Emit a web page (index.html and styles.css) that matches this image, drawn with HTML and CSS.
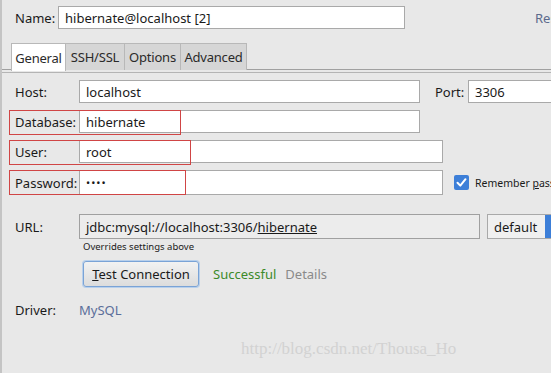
FILE: index.html
```html
<!DOCTYPE html>
<html>
<head>
<meta charset="utf-8">
<link rel="stylesheet" href="styles.css">
</head>
<body>
<div class="frame">
  <div class="edge-mark"></div>
  <div class="name-row">
    <span class="lbl name-lbl">Name:</span>
    <div class="input name-input">hibernate@localhost [2]</div>
    <span class="reset">Reset</span>
  </div>
  <div class="tabs">
    <div class="tab t1 active">General</div>
    <div class="tab t2">SSH/SSL</div>
    <div class="tab t3">Options</div>
    <div class="tab t4">Advanced</div>
  </div>
  <div class="form">
    <div class="row">
      <span class="lbl">Host:</span>
      <div class="input w-host">localhost</div>
      <span class="lbl port-lbl">Port:</span>
      <div class="input w-port">3306</div>
    </div>
    <div class="row mark mark-db">
      <span class="lbl">Database:</span>
      <div class="input w-host">hibernate</div>
    </div>
    <div class="row mark mark-user">
      <span class="lbl">User:</span>
      <div class="input w-user">root</div>
    </div>
    <div class="row mark mark-pw pw-row">
      <span class="lbl">Password:</span>
      <div class="input w-user pw">••••</div>
      <span class="check"><svg width="15" height="15" viewBox="0 0 15 15"><rect x="0" y="0" width="15" height="15" rx="2" fill="#3d7fd8"/><path d="M3.5 7.8 L6.3 10.6 L11.5 4.2" stroke="#fff" stroke-width="2" fill="none" stroke-linecap="round" stroke-linejoin="round"/></svg></span>
      <span class="remember">Remember <u>p</u>assword</span>
    </div>
    <div class="row url-row">
      <span class="lbl">URL:</span>
      <div class="input url">jdbc:mysql://localhost:3306/<u>hibernate</u></div>
      <div class="input dflt">default<span class="dflt-btn"></span></div>
    </div>
    <div class="hint">Overrides settings above</div>
    <div class="test-row">
      <button class="test-btn"><u>T</u>est Connection</button>
      <span class="ok">Successful</span>
      <span class="details">Details</span>
    </div>
    <div class="row driver-row">
      <span class="lbl">Driver:</span>
      <span class="mysql">MySQL</span>
    </div>
  </div>
  <div class="watermark">http://blog.csdn.net/Thousa_Ho</div>
</div>
</body>
</html>
```
FILE: styles.css
```css
* { box-sizing: border-box; }
html, body { margin: 0; padding: 0; }
body {
  width: 551px; height: 373px; overflow: hidden;
  background: #e8e8e8;
  font-family: "Noto Sans", "Open Sans", sans-serif;
  font-size: 13px; color: #1a1a1a;
}
.frame {
  position: relative;
  width: 551px; height: 373px;
  border-left: 2px solid #c4c4c4;
  overflow: hidden;
}
.edge-mark {
  position: absolute; left: -2px; top: 64px;
  width: 2px; height: 24px; background: #5b8fd6;
}
.name-row {
  display: flex; align-items: center;
  height: 23px; margin-top: 6px;
  padding-left: 13px;
}
.name-lbl { width: 43px; flex: none; }
.input {
  flex: none;
  background: #fff;
  border: 1px solid #a9a9a9;
  height: 23px;
  display: flex; align-items: center;
  padding-left: 6px;
  white-space: nowrap; overflow: hidden;
}
.name-input { width: 347px; }
.reset { margin-left: 130px; color: #5b6a8c; white-space: nowrap; }
.tabs {
  display: flex; margin-top: 14px;
  padding-left: 9px;
  height: 27px;
  border-bottom: 1px solid #a0a0a0;
  position: relative;
}
.tabs::after {
  content: ""; position: absolute; left: 0; right: 0; bottom: -4px;
  height: 1px; background: #b4b4b4;
}
.tab {
  display: flex; align-items: center; justify-content: center;
  background: #d6d6d6;
  border: 1px solid #b8b8b8; border-bottom: none;
  height: 27px; flex: none;
  color: #2a2a2a; letter-spacing: -0.2px;
}
.t1 { width: 55px; }
.t2 { width: 59px; }
.t3 { width: 56px; }
.t4 { width: 66px; }
.tab + .tab { border-left: none; }
.tab.active { background: #fff; height: 28px; margin-bottom: -1px; }
.form { padding-left: 13px; margin-top: 10px; }
.row {
  display: flex; align-items: center;
  height: 23px; margin-bottom: 7px;
  position: relative;
}
.row .lbl { width: 64px; flex: none; }
.w-host { width: 341px; }
.w-user { width: 364px; }
.port-lbl { width: 33px !important; margin-left: 15px; }
.w-port { width: 90px; }
.mark::before {
  content: ""; position: absolute; top: 0; left: -6px; height: 23px;
  border: 1px solid #d04545;
}
.mark-db::before { width: 170px; }
.mark-user::before { width: 180px; }
.mark-pw::before { width: 175px; }
.pw-row { height: 25px; }
.pw-row .input { height: 25px; }
.pw { letter-spacing: 1px; font-size: 11px; }
.check { margin-left: 11px; display: flex; flex: none; }
.remember { margin-left: 6px; font-size: 10.5px; white-space: nowrap; }
.url-row { height: 25px; margin-top: 19px; margin-bottom: 0; }
.url { width: 401px; height: 25px; background: #ececec; border-color: #a0a0a0; }
.dflt { width: 64px; height: 25px; margin-left: 7px; background: #f0f0f0; position: relative; border-right: none; }
.dflt-btn { position: absolute; right: 0; top: 0; bottom: 0; width: 6px; background: #3d7fd8; }
.hint { font-size: 9.5px; margin-left: 68px; margin-top: 1px; height: 13px; }
.test-row { display: flex; align-items: center; margin-left: 68px; margin-top: 8px; height: 26px; }
.test-btn {
  font: inherit; color: #1a1a1a;
  width: 116px; height: 26px;
  border: 1px solid #7aa3d6;
  box-shadow: 0 0 0 1px #b8d0ec;
  border-radius: 3px;
  background: linear-gradient(#f2f2f2, #dcdcdc);
  padding: 0;
}
.ok { color: #3c8a2a; margin-left: 14px; }
.details { color: #8a8a8a; margin-left: 9px; }
.driver-row { margin-top: 11px; }
.mysql { color: #5a6e9a; }
.watermark {
  position: absolute; left: 239px; top: 339px;
  font-family: "Liberation Serif", serif; font-size: 17px;
  color: #d2d2d2; white-space: nowrap;
}
```
